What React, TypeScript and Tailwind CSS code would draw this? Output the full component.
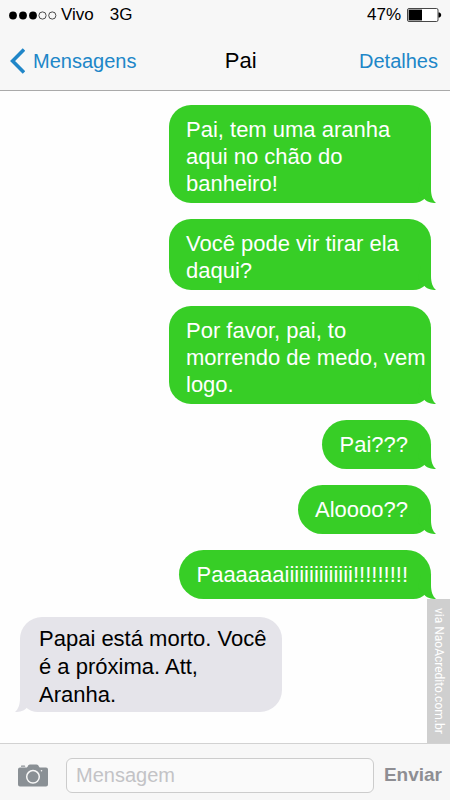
import clsx from "clsx";

interface Message {
  text: string;
  sent: boolean;
  wide?: boolean;
}

const messages: Message[] = [
  { text: "Pai, tem uma aranha aqui no chão do banheiro!", sent: true, wide: true },
  { text: "Você pode vir tirar ela daqui?", sent: true, wide: true },
  { text: "Por favor, pai, to morrendo de medo, vem logo.", sent: true, wide: true },
  { text: "Pai???", sent: true },
  { text: "Aloooo??", sent: true },
  { text: "Paaaaaaiiiiiiiiiiiiii!!!!!!!!!", sent: true },
  { text: "Papai está morto. Você é a próxima. Att, Aranha.", sent: false, wide: true },
];

function StatusBar() {
  return (
    <div className="flex h-[30px] items-center justify-between pl-[9px] pr-2 text-[17px] leading-5">
      <div className="flex items-center">
        <svg width="48" height="9" viewBox="0 0 48 9" aria-label="Sinal">
          <circle cx="4" cy="4.5" r="3.9" />
          <circle cx="14" cy="4.5" r="3.9" />
          <circle cx="24" cy="4.5" r="3.9" />
          <circle cx="33.5" cy="4.5" r="3.6" fill="none" stroke="#222" strokeWidth="0.8" />
          <circle cx="43.3" cy="4.5" r="3.6" fill="none" stroke="#222" strokeWidth="0.8" />
        </svg>
        <span className="ml-1">Vivo</span>
        <span className="ml-4">3G</span>
      </div>
      <div className="flex items-center gap-1.5">
        <span>47%</span>
        <svg width="35" height="14" viewBox="0 0 35 14" aria-label="Bateria">
          <rect x="0.5" y="0.5" width="30.5" height="13" rx="1.5" fill="#fff" stroke="#333" strokeWidth="0.9" />
          <rect x="1.6" y="1.6" width="13.4" height="10.8" />
          <path d="M31.5 4.5h1c1 .5 1.7 1.5 1.7 2.5s-.7 2-1.7 2.5h-1z" />
        </svg>
      </div>
    </div>
  );
}

function NavBar() {
  return (
    <nav className="flex h-[60px] items-center justify-between pt-0.5 pr-3 pl-2.5 text-xl text-[#2086c8]">
      <a href="#mensagens" className="flex items-center gap-2">
        <svg width="15" height="26" viewBox="0 0 15 26" fill="none" stroke="currentColor" strokeWidth="3.6">
          <path d="M14 1.5 2.6 13 14 24.5" />
        </svg>
        Mensagens
      </a>
      <h1 className="pr-3.5 text-[22px] text-black">Pai</h1>
      <a href="#detalhes">Detalhes</a>
    </nav>
  );
}

function Tail({ sent }: { sent: boolean }) {
  return (
    <svg
      width="20"
      height="24"
      viewBox="0 0 20 24"
      fill="currentColor"
      aria-hidden="true"
      className={clsx(
        "absolute bottom-0",
        sent ? "-right-[5px] text-[#37ce26]" : "-left-[5px] -scale-x-100 text-[#e5e4ea]"
      )}
    >
      <path d="M5 0H15V10C15 16 16.5 21 20 24C15 24 11 23 8 19.5L2 12Z" />
    </svg>
  );
}

function Bubble({ text, sent, wide }: Message) {
  return (
    <li
      className={clsx(
        "relative text-[22px]",
        wide ? "w-[262px] rounded-[22px]" : "min-h-[49px] rounded-[25px] pr-[23px]",
        sent
          ? "self-end rounded-br-[18px] bg-[#37ce26] pt-[11px] pb-[6px] pl-[17px] leading-[27px] text-white"
          : "mt-0.5 self-start rounded-bl-[18px] bg-[#e5e4ea] pt-2 pr-3 pb-[3px] pl-[19px] leading-7 text-black"
      )}
    >
      <Tail sent={sent} />
      <span className="relative">{text}</span>
    </li>
  );
}

function CameraIcon() {
  return (
    <svg width="30" height="23" viewBox="0 0 30 23" fill="#8a9095" aria-hidden="true">
      <path d="M3.5 1.5h3q.7 0 .7.7v.6H3v-.8q0-.5.5-.5z" />
      <path d="M2 3.6H8Q9 3.6 9.7 2.4L10.3 1.3Q11 .5 12 .5h6.500q1 0 1.700.8L20.900 2.400Q21.600 3.600 22.600 3.600H28q2 0 2 2V20.500q0 2-2 2H2q-2 0-2-2V5.600q0-2 2-2z" />
      <circle cx="15" cy="12.8" r="6.3" fill="none" stroke="#f7f7f7" strokeWidth="1.5" />
      <circle cx="23.5" cy="6.8" r="0.8" fill="#f7f7f7" />
    </svg>
  );
}

export default function App() {
  return (
    <div className="flex min-h-screen flex-col bg-[#fefefe] font-['Liberation_Sans',Arial,sans-serif] text-black">
      <header className="border-b border-[#aaaaaa] bg-[#f7f7f7]">
        <StatusBar />
        <NavBar />
      </header>

      <main className="relative flex-1 pt-[14px] pb-6">
        <ul className="flex flex-col gap-4 pr-[19px] pl-5">
          {messages.map((message) => (
            <Bubble key={message.text} {...message} />
          ))}
        </ul>
        <p className="absolute right-0 bottom-0 flex h-36 w-[23px] items-center justify-center bg-[#cfcfcf] font-[Roboto,sans-serif] text-xs whitespace-nowrap text-white [writing-mode:vertical-rl]">
          via NaoAcredito.com.br
        </p>
      </main>

      <form className="flex h-[57px] items-center border-t border-[#d2d2d2] bg-[#f7f7f7] pt-1.5 pr-2 pl-[18px]">
        <button type="button" aria-label="Câmera">
          <CameraIcon />
        </button>
        <input
          type="text"
          aria-label="Mensagem"
          placeholder="Mensagem"
          className="ml-[18px] h-[35px] min-w-0 flex-1 rounded-md border border-[#cccccc] bg-[#fafafa] px-[9px] text-xl placeholder:text-[#c3c3c6]"
        />
        <button type="submit" className="ml-2.5 text-[19px] font-bold text-[#8e8e93]">
          Enviar
        </button>
      </form>
    </div>
  );
}
